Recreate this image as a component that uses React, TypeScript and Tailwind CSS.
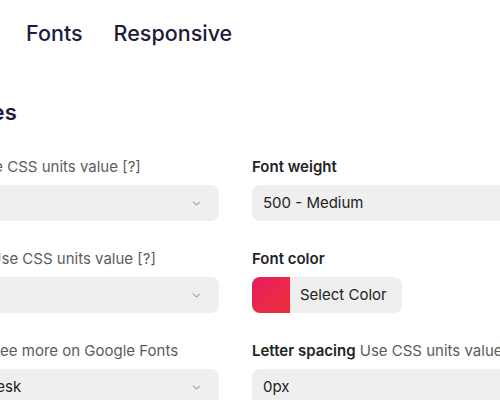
import React from "react";
import { ChevronDown } from "lucide-react";

const font = { fontFamily: "Inter, 'Liberation Sans', sans-serif" };

function Label({ title, hint }: { title: string; hint?: string }) {
  return (
    <div className="text-[15px] leading-[20px] whitespace-nowrap">
      <span className="font-semibold text-[#222]">{title}</span>
      {hint && <span className="text-[#5c5c5c]"> {hint}</span>}
    </div>
  );
}

function Select({ value }: { value: string }) {
  return (
    <div className="mt-2 h-9 rounded-lg bg-[#efefef] flex items-center justify-between pl-[11px] pr-[16px] text-[15px] text-[#222]">
      <span>{value}</span>
      <ChevronDown size={13} strokeWidth={1.75} className="text-[#777]" />
    </div>
  );
}

function TextInput({ value }: { value: string }) {
  return (
    <div className="mt-2 h-9 rounded-lg bg-[#efefef] flex items-center pl-[11px] text-[15px] text-[#222]">
      {value}
    </div>
  );
}

export default function App() {
  const tabs = ["Colors", "Fonts", "Responsive"];
  return (
    <div className="w-[500px] h-[400px] overflow-hidden bg-white" style={font}>
      <div className="ml-[-94px] w-[659px]">
        <div className="pt-[19px] pl-[22px] flex gap-[31px] text-[21.5px] leading-[28px] font-medium text-[#1e1c3a]">
          {tabs.map((t) => (
            <div key={t}>{t}</div>
          ))}
        </div>
        <div className="mt-[50px] ml-[-5px] text-[22px] leading-[30px] font-semibold text-[#1e1c3a]">Text styles</div>
        <div className="mt-[30px] grid grid-cols-[313px_313px] gap-x-[33px] gap-y-[28px]">
          <div>
            <Label title="Font size" hint="Use CSS units value [?]" />
            <Select value="16px" />
          </div>
          <div>
            <Label title="Font weight" />
            <Select value="500 - Medium" />
          </div>
          <div>
            <Label title="Line height" hint="Use CSS units value [?]" />
            <Select value="1.5" />
          </div>
          <div>
            <Label title="Font color" />
            <div className="mt-2 h-9 w-[150px] rounded-lg bg-[#efefef] flex items-center overflow-hidden">
              <div className="h-full w-[38px] bg-gradient-to-br from-[#ec1a5c] to-[#e8303a]" />
              <span className="ml-[10px] text-[15px] text-[#222]">Select Color</span>
            </div>
          </div>
          <div>
            <Label title="Font family" hint="See more on Google Fonts" />
            <Select value="Space Grotesk" />
          </div>
          <div>
            <Label title="Letter spacing" hint="Use CSS units value [?]" />
            <TextInput value="0px" />
          </div>
        </div>
      </div>
    </div>
  );
}
